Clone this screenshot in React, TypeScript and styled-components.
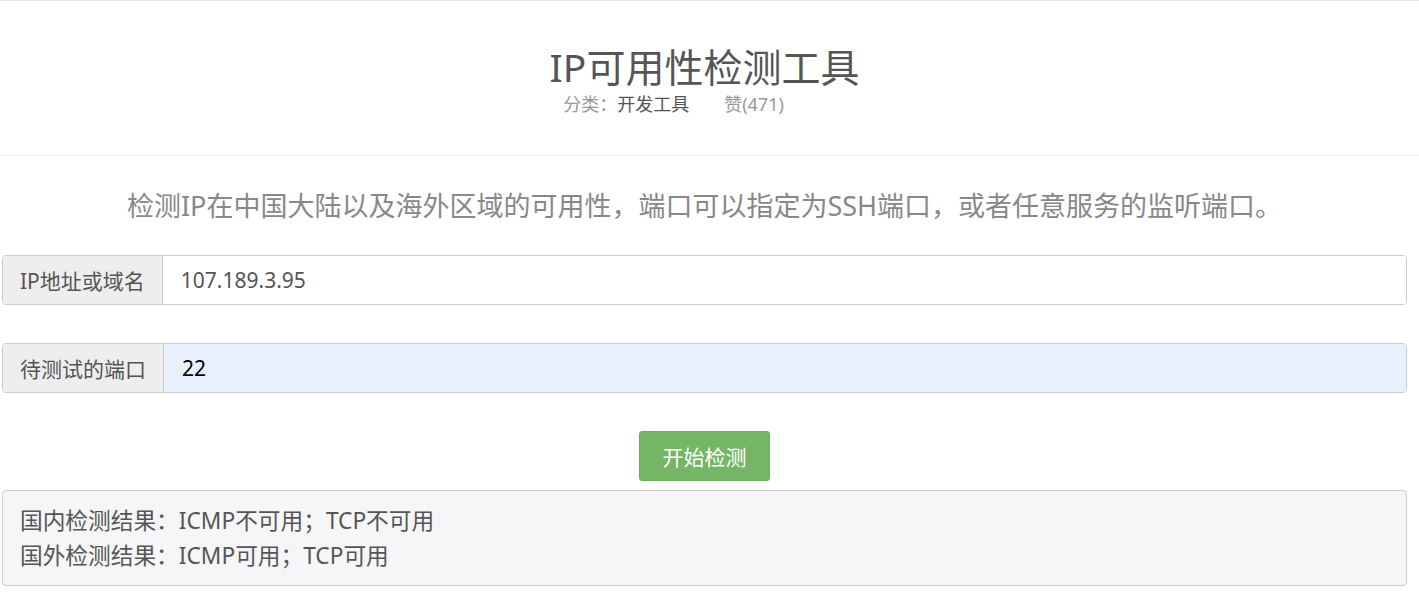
import React from "react";
import styled, { createGlobalStyle } from "styled-components";

const Global = createGlobalStyle`
  html, body { margin: 0; padding: 0; background: #fff; }
  body { font-family: "Noto Sans", "Noto Sans CJK SC", sans-serif; color: #555; }
  * { box-sizing: border-box; }
`;

const Header = styled.header`
  border-top: 1px solid #e6e6e6;
  border-bottom: 1px solid #eeeeee;
  padding: 43px 12px 38px 2px;
  text-align: center;
`;

const Title = styled.h1`
  margin: 0;
  font-size: 39px;
  line-height: 46px;
  font-weight: 400;
  color: #555;
`;

const Meta = styled.div`
  margin-top: 1px;
  padding-right: 62px;
  font-size: 18px;
  line-height: 26px;
  color: #999;
  display: flex;
  justify-content: center;
  gap: 35px;
`;

const MetaLink = styled.span`
  color: #555;
`;

const Main = styled.main`
  padding: 0 12px 0 2px;
`;

const Desc = styled.p`
  margin: 32px 0 31px;
  text-align: center;
  font-size: 27px;
  line-height: 36px;
  color: #888;
`;

const Group = styled.div`
  display: flex;
  height: 50px;
  border: 1px solid #ccc;
  border-radius: 4px;
  overflow: hidden;
  & + & {
    margin-top: 38px;
  }
`;

const Addon = styled.span`
  display: flex;
  align-items: center;
  padding: 0 17px;
  background: #eeeeee;
  border-right: 1px solid #ccc;
  font-size: 21px;
  color: #555;
  white-space: nowrap;
`;

const Input = styled.input<{ $filled?: boolean }>`
  flex: 1;
  border: 0;
  outline: none;
  padding: 0 18px;
  font-family: "Noto Sans", "Noto Sans CJK SC", sans-serif;
  font-size: 21px;
  color: ${(p) => (p.$filled ? "#000" : "#555")};
  background: ${(p) => (p.$filled ? "#e8f0fe" : "#fff")};
`;

const ButtonRow = styled.div`
  display: flex;
  justify-content: center;
  margin-top: 38px;
`;

const Button = styled.button`
  width: 131px;
  height: 50px;
  background: #74b566;
  border: 1px solid #6aae5c;
  border-radius: 3px;
  color: #fff;
  font-family: "Noto Sans", "Noto Sans CJK SC", sans-serif;
  font-size: 21px;
  cursor: pointer;
`;

const Result = styled.div`
  margin-top: 9px;
  border: 1px solid #ccc;
  border-radius: 4px;
  background: #f6f6f8;
  padding: 12px 17px;
  font-size: 22.7px;
  line-height: 35px;
  color: #555;
`;

export default function App() {
  return (
    <>
      <Global />
      <Header>
        <Title>IP可用性检测工具</Title>
        <Meta>
          <span>
            分类：<MetaLink>开发工具</MetaLink>
          </span>
          <span>赞(471)</span>
        </Meta>
      </Header>
      <Main>
        <Desc>检测IP在中国大陆以及海外区域的可用性，端口可以指定为SSH端口，或者任意服务的监听端口。</Desc>
        <Group>
          <Addon>IP地址或域名</Addon>
          <Input defaultValue="107.189.3.95" />
        </Group>
        <Group>
          <Addon>待测试的端口</Addon>
          <Input $filled defaultValue="22" />
        </Group>
        <ButtonRow>
          <Button>开始检测</Button>
        </ButtonRow>
        <Result>
          <div>国内检测结果：ICMP不可用；TCP不可用</div>
          <div>国外检测结果：ICMP可用；TCP可用</div>
        </Result>
      </Main>
    </>
  );
}
